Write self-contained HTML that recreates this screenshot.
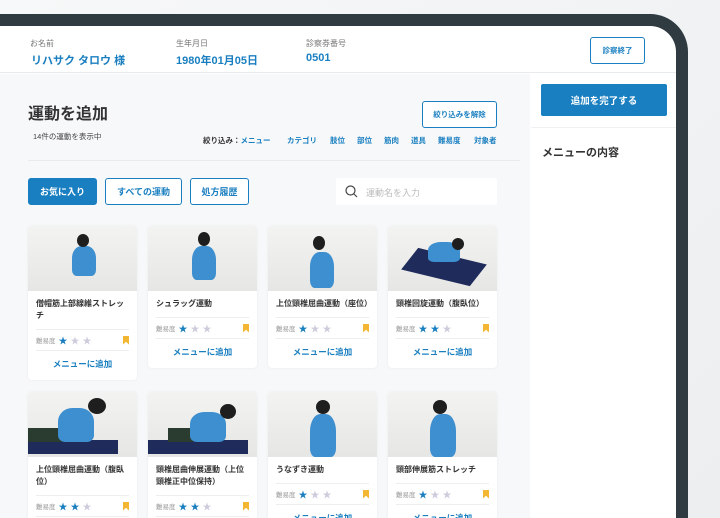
<!DOCTYPE html><html><head><meta charset="utf-8"><style>
*{margin:0;padding:0;box-sizing:border-box}
html,body{width:720px;height:518px;overflow:hidden}
body{background:linear-gradient(135deg,#f7f8f9,#eceef0);font-family:"Liberation Sans","Noto Sans CJK JP",sans-serif;position:relative}
.frame{position:absolute;left:-20px;top:14px;width:708px;height:504px;background:#2f3b40;border-radius:0 38px 0 0;overflow:hidden}
.screen{position:absolute;left:0;top:26px;width:676px;height:492px;background:#fff;border-radius:0 26px 0 0;overflow:hidden}
.hdr{position:absolute;left:0;top:0;width:676px;height:47px;border-bottom:1px solid #e8ebee}
.lab{position:absolute;font-size:8px;color:#777;top:12px}
.val{position:absolute;font-size:11px;color:#1a7fc0;font-weight:bold;top:26px}
.btn{position:absolute;border:1px solid #1a7fc0;border-radius:3px;color:#1a7fc0;font-size:8.5px;font-weight:bold;display:flex;align-items:center;justify-content:center;background:#fff}
.main{position:absolute;left:0;top:48px;width:530px;height:444px;background:#f7f8fa;overflow:hidden}
.side{position:absolute;left:531px;top:48px;width:145px;height:444px;background:#fff}
.card{position:absolute;width:109px;background:#fff;border-radius:4px;box-shadow:0 0 3px rgba(0,0,0,.06);overflow:hidden}
.img{height:65px;background:linear-gradient(#f3f3f2,#e6e6e4);position:relative}
.fig{position:absolute;background:#3d8fcf;border-radius:40% 40% 20% 20%}
.head{position:absolute;background:#1e1e1e;border-radius:50%}
.t{font-size:8px;font-weight:bold;color:#333;padding:7px 8px 0;line-height:12px}
.r{margin:7px 8px 0;border-top:1px solid #eee;border-bottom:1px solid #eee;height:22px;display:flex;align-items:center;font-size:6.5px;color:#999}
.s{font-size:9px;margin-left:3px;color:#ccd}
.s.on{color:#1a7fc0}
.bm{margin-left:auto;width:6px;height:9px;background:#f2b632;clip-path:polygon(0 0,100% 0,100% 100%,50% 70%,0 100%)}
.a{text-align:center;font-size:8.5px;color:#1a7fc0;font-weight:bold;padding:7px 0 10px}
.f{position:absolute;top:61px;font-size:7.5px;color:#1a7fc0;font-weight:bold}
</style></head><body>
<div class="frame"></div>
<div class="screen">
<div class="hdr">
<div class="lab" style="left:30px">お名前</div><div class="val" style="left:31px">リハサク タロウ 様</div>
<div class="lab" style="left:176px">生年月日</div><div class="val" style="left:176px">1980年01月05日</div>
<div class="lab" style="left:306px">診察券番号</div><div class="val" style="left:306px">0501</div>
<div class="btn" style="left:590px;top:11px;width:55px;height:27px;font-size:7.5px">診察終了</div>
</div>
<div class="main">
<div style="position:absolute;left:28px;top:26px;font-size:16px;font-weight:bold;color:#333">運動を追加</div>
<div style="position:absolute;left:33px;top:57px;font-size:7.5px;color:#444">14件の運動を表示中</div>
<div class="btn" style="left:422px;top:27px;width:75px;height:27px;font-size:7.5px">絞り込みを解除</div>
<div class="f" style="left:203px;color:#333">絞り込み：<span style="color:#1a7fc0">メニュー</span></div>
<div class="f" style="left:287px">カテゴリ</div><div class="f" style="left:330px">肢位</div><div class="f" style="left:357px">部位</div><div class="f" style="left:384px">筋肉</div><div class="f" style="left:411px">道具</div><div class="f" style="left:438px">難易度</div><div class="f" style="left:474px">対象者</div>
<div style="position:absolute;left:28px;top:86px;width:492px;border-top:1px solid #e8ebee"></div>
<div class="btn" style="left:28px;top:104px;width:69px;height:27px;background:#1a7fc0;color:#fff;font-size:9px">お気に入り</div>
<div class="btn" style="left:105px;top:104px;width:77px;height:27px;font-size:9px">すべての運動</div>
<div class="btn" style="left:190px;top:104px;width:59px;height:27px;font-size:9px">処方履歴</div>
<div style="position:absolute;left:336px;top:104px;width:161px;height:27px;background:#fff;border-radius:2px;font-size:9px;color:#bbb;padding:8px 0 0 30px">運動名を入力
<svg style="position:absolute;left:9px;top:7px" width="13" height="13" viewBox="0 0 13 13"><circle cx="5.5" cy="5.5" r="4.5" fill="none" stroke="#444" stroke-width="1.2"/><path d="M9 9l3 3" stroke="#444" stroke-width="1.2"/></svg></div>

<div class="card" style="left:28px;top:152px"><div class="img"><div class="fig" style="left:44px;top:20px;width:24px;height:30px"></div><div class="head" style="left:49px;top:8px;width:12px;height:13px"></div></div><div class="t">僧帽筋上部線維ストレッチ</div><div class="r">難易度<span class="s on">★</span><span class="s">★</span><span class="s">★</span><div class="bm"></div></div><div class="a">メニューに追加</div></div>
<div class="card" style="left:148px;top:152px"><div class="img"><div class="fig" style="left:44px;top:20px;width:24px;height:34px"></div><div class="head" style="left:50px;top:6px;width:12px;height:14px"></div></div><div class="t">シュラッグ運動</div><div class="r">難易度<span class="s on">★</span><span class="s">★</span><span class="s">★</span><div class="bm"></div></div><div class="a">メニューに追加</div></div>
<div class="card" style="left:268px;top:152px"><div class="img"><div class="fig" style="left:42px;top:26px;width:24px;height:36px"></div><div class="head" style="left:45px;top:10px;width:12px;height:14px"></div></div><div class="t">上位頸椎屈曲運動（座位）</div><div class="r">難易度<span class="s on">★</span><span class="s">★</span><span class="s">★</span><div class="bm"></div></div><div class="a">メニューに追加</div></div>
<div class="card" style="left:388px;top:152px"><div class="img"><div style="position:absolute;left:16px;top:30px;width:80px;height:22px;background:#1f2b5a;transform:skewX(-30deg) rotate(12deg)"></div><div class="fig" style="left:40px;top:16px;width:32px;height:20px"></div><div class="head" style="left:64px;top:12px;width:12px;height:12px"></div></div><div class="t">頸椎回旋運動（腹臥位）</div><div class="r">難易度<span class="s on">★</span><span class="s on">★</span><span class="s">★</span><div class="bm"></div></div><div class="a">メニューに追加</div></div>

<div class="card" style="left:28px;top:318px"><div class="img"><div style="position:absolute;left:0;top:48px;width:90px;height:14px;background:#1f2b5a"></div><div style="position:absolute;left:0;top:36px;width:35px;height:14px;background:#2a3b30"></div><div class="fig" style="left:30px;top:16px;width:36px;height:34px"></div><div class="head" style="left:60px;top:6px;width:18px;height:16px"></div></div><div class="t">上位頸椎屈曲運動（腹臥位）</div><div class="r">難易度<span class="s on">★</span><span class="s on">★</span><span class="s">★</span><div class="bm"></div></div><div class="a">メニューに追加</div></div>
<div class="card" style="left:148px;top:318px"><div class="img"><div style="position:absolute;left:0;top:48px;width:100px;height:14px;background:#1f2b5a"></div><div style="position:absolute;left:20px;top:36px;width:25px;height:14px;background:#2a3b30"></div><div class="fig" style="left:42px;top:20px;width:36px;height:30px"></div><div class="head" style="left:72px;top:12px;width:16px;height:15px"></div></div><div class="t">頸椎屈曲伸展運動（上位頸椎正中位保持）</div><div class="r">難易度<span class="s on">★</span><span class="s on">★</span><span class="s">★</span><div class="bm"></div></div><div class="a">メニューに追加</div></div>
<div class="card" style="left:268px;top:318px"><div class="img"><div class="fig" style="left:42px;top:22px;width:26px;height:43px"></div><div class="head" style="left:48px;top:8px;width:14px;height:14px"></div></div><div class="t">うなずき運動</div><div class="r">難易度<span class="s on">★</span><span class="s">★</span><span class="s">★</span><div class="bm"></div></div><div class="a">メニューに追加</div></div>
<div class="card" style="left:388px;top:318px"><div class="img"><div class="fig" style="left:42px;top:22px;width:26px;height:43px"></div><div class="head" style="left:45px;top:8px;width:14px;height:14px"></div></div><div class="t">頸部伸展筋ストレッチ</div><div class="r">難易度<span class="s on">★</span><span class="s">★</span><span class="s">★</span><div class="bm"></div></div><div class="a">メニューに追加</div></div>
</div>
<div class="side">
<div class="btn" style="left:10px;top:10px;width:126px;height:32px;background:#1a7fc0;color:#fff;font-size:9.5px;border-radius:2px">追加を完了する</div>
<div style="position:absolute;left:0;top:53px;width:145px;border-top:1px solid #eef0f2"></div>
<div style="position:absolute;left:11px;top:70px;font-size:11px;font-weight:bold;color:#333">メニューの内容</div>
</div>
</div>
</body></html>
